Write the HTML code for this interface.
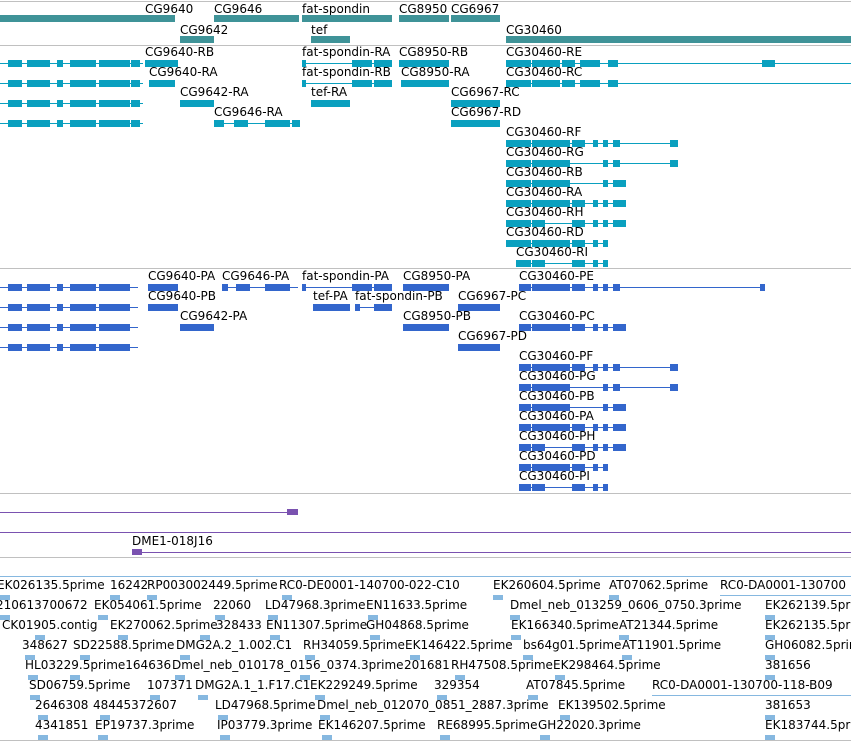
<!DOCTYPE html>
<html><head><meta charset="utf-8"><style>
body{margin:0;width:851px;height:741px;overflow:hidden;background:#fff;position:relative;font-family:"DejaVu Sans","Liberation Sans",sans-serif;font-size:12px;color:#000}
.t{position:absolute;white-space:nowrap;line-height:13px}
.s{position:absolute;height:1px;background:#c0c0c0;left:0;width:851px}
div.b{position:absolute}
</style></head><body>
<div class="s" style="top:1px"></div>
<div class="s" style="top:45px"></div>
<div class="s" style="top:268px"></div>
<div class="s" style="top:493px"></div>
<div class="s" style="top:557px"></div>
<div class="s" style="top:740px"></div>

<div class="t" style="left:145px;top:3px">CG9640</div>
<div class="t" style="left:214px;top:3px">CG9646</div>
<div class="t" style="left:302px;top:3px">fat-spondin</div>
<div class="t" style="left:399px;top:3px">CG8950</div>
<div class="t" style="left:451px;top:3px">CG6967</div>
<div class="t" style="left:180px;top:24px">CG9642</div>
<div class="t" style="left:311px;top:24px">tef</div>
<div class="t" style="left:506px;top:24px">CG30460</div>

<div class="t" style="left:145px;top:46px">CG9640-RB</div>
<div class="t" style="left:302px;top:46px">fat-spondin-RA</div>
<div class="t" style="left:399px;top:46px">CG8950-RB</div>
<div class="t" style="left:506px;top:46px">CG30460-RE</div>
<div class="t" style="left:149px;top:66px">CG9640-RA</div>
<div class="t" style="left:302px;top:66px">fat-spondin-RB</div>
<div class="t" style="left:401px;top:66px">CG8950-RA</div>
<div class="t" style="left:506px;top:66px">CG30460-RC</div>
<div class="t" style="left:180px;top:86px">CG9642-RA</div>
<div class="t" style="left:311px;top:86px">tef-RA</div>
<div class="t" style="left:451px;top:86px">CG6967-RC</div>
<div class="t" style="left:214px;top:106px">CG9646-RA</div>
<div class="t" style="left:451px;top:106px">CG6967-RD</div>
<div class="t" style="left:506px;top:126px">CG30460-RF</div>
<div class="t" style="left:506px;top:146px">CG30460-RG</div>
<div class="t" style="left:506px;top:166px">CG30460-RB</div>
<div class="t" style="left:506px;top:186px">CG30460-RA</div>
<div class="t" style="left:506px;top:206px">CG30460-RH</div>
<div class="t" style="left:506px;top:226px">CG30460-RD</div>
<div class="t" style="left:516px;top:246px">CG30460-RI</div>

<div class="t" style="left:148px;top:270px">CG9640-PA</div>
<div class="t" style="left:222px;top:270px">CG9646-PA</div>
<div class="t" style="left:302px;top:270px">fat-spondin-PA</div>
<div class="t" style="left:403px;top:270px">CG8950-PA</div>
<div class="t" style="left:519px;top:270px">CG30460-PE</div>
<div class="t" style="left:148px;top:290px">CG9640-PB</div>
<div class="t" style="left:313px;top:290px">tef-PA</div>
<div class="t" style="left:355px;top:290px">fat-spondin-PB</div>
<div class="t" style="left:458px;top:290px">CG6967-PC</div>
<div class="t" style="left:180px;top:310px">CG9642-PA</div>
<div class="t" style="left:403px;top:310px">CG8950-PB</div>
<div class="t" style="left:519px;top:310px">CG30460-PC</div>
<div class="t" style="left:458px;top:330px">CG6967-PD</div>
<div class="t" style="left:519px;top:350px">CG30460-PF</div>
<div class="t" style="left:519px;top:370px">CG30460-PG</div>
<div class="t" style="left:519px;top:390px">CG30460-PB</div>
<div class="t" style="left:519px;top:410px">CG30460-PA</div>
<div class="t" style="left:519px;top:430px">CG30460-PH</div>
<div class="t" style="left:519px;top:450px">CG30460-PD</div>
<div class="t" style="left:519px;top:470px">CG30460-PI</div>

<div class="t" style="left:132px;top:535px">DME1-018J16</div>

<div class="t" style="left:-3px;top:579px">EK026135.5prime</div>
<div class="t" style="left:110px;top:579px">16242</div>
<div class="t" style="left:147px;top:579px">RP003002449.5prime</div>
<div class="t" style="left:279px;top:579px">RC0-DE0001-140700-022-C10</div>
<div class="t" style="left:493px;top:579px">EK260604.5prime</div>
<div class="t" style="left:609px;top:579px">AT07062.5prime</div>
<div class="t" style="left:720px;top:579px">RC0-DA0001-130700</div>

<div class="t" style="left:-4px;top:599px">210613700672</div>
<div class="t" style="left:94px;top:599px">EK054061.5prime</div>
<div class="t" style="left:213px;top:599px">22060</div>
<div class="t" style="left:265px;top:599px">LD47968.3prime</div>
<div class="t" style="left:366px;top:599px">EN11633.5prime</div>
<div class="t" style="left:510px;top:599px">Dmel_neb_013259_0606_0750.3prime</div>
<div class="t" style="left:765px;top:599px">EK262139.5prime</div>

<div class="t" style="left:2px;top:619px">CK01905.contig</div>
<div class="t" style="left:110px;top:619px">EK270062.5prime</div>
<div class="t" style="left:216px;top:619px">328433</div>
<div class="t" style="left:266px;top:619px">EN11307.5prime</div>
<div class="t" style="left:366px;top:619px">GH04868.5prime</div>
<div class="t" style="left:511px;top:619px">EK166340.5prime</div>
<div class="t" style="left:619px;top:619px">AT21344.5prime</div>
<div class="t" style="left:765px;top:619px">EK262135.5prime</div>

<div class="t" style="left:22px;top:639px">348627</div>
<div class="t" style="left:73px;top:639px">SD22588.5prime</div>
<div class="t" style="left:176px;top:639px">DMG2A.2_1.002.C1</div>
<div class="t" style="left:303px;top:639px">RH34059.5prime</div>
<div class="t" style="left:405px;top:639px">EK146422.5prime</div>
<div class="t" style="left:523px;top:639px">bs64g01.5prime</div>
<div class="t" style="left:622px;top:639px">AT11901.5prime</div>
<div class="t" style="left:765px;top:639px">GH06082.5prime</div>

<div class="t" style="left:25px;top:659px">HL03229.5prime164636</div>
<div class="t" style="left:172px;top:659px">Dmel_neb_010178_0156_0374.3prime</div>
<div class="t" style="left:404px;top:659px">201681</div>
<div class="t" style="left:451px;top:659px">RH47508.5prime</div>
<div class="t" style="left:553px;top:659px">EK298464.5prime</div>
<div class="t" style="left:765px;top:659px">381656</div>

<div class="t" style="left:29px;top:679px">SD06759.5prime</div>
<div class="t" style="left:147px;top:679px">107371</div>
<div class="t" style="left:195px;top:679px">DMG2A.1_1.F17.C1</div>
<div class="t" style="left:310px;top:679px">EK229249.5prime</div>
<div class="t" style="left:434px;top:679px">329354</div>
<div class="t" style="left:526px;top:679px">AT07845.5prime</div>
<div class="t" style="left:652px;top:679px">RC0-DA0001-130700-118-B09</div>

<div class="t" style="left:35px;top:699px">2646308</div>
<div class="t" style="left:93px;top:699px">48445372607</div>
<div class="t" style="left:215px;top:699px">LD47968.5prime</div>
<div class="t" style="left:317px;top:699px">Dmel_neb_012070_0851_2887.3prime</div>
<div class="t" style="left:558px;top:699px">EK139502.5prime</div>
<div class="t" style="left:765px;top:699px">381653</div>

<div class="t" style="left:35px;top:719px">4341851</div>
<div class="t" style="left:95px;top:719px">EP19737.3prime</div>
<div class="t" style="left:217px;top:719px">IP03779.3prime</div>
<div class="t" style="left:318px;top:719px">EK146207.5prime</div>
<div class="t" style="left:437px;top:719px">RE68995.5prime</div>
<div class="t" style="left:538px;top:719px">GH22020.3prime</div>
<div class="t" style="left:765px;top:719px">EK183744.5prime</div>

<script>
function R(x1,x2,y,h,c){var d=document.createElement('div');d.className='b';d.style.cssText='left:'+x1+'px;width:'+(x2-x1)+'px;top:'+y+'px;height:'+h+'px;background:'+c;document.body.appendChild(d);}
function B(x1,x2,y,c){R(x1,x2,y-3,7,c);}
function L(x1,x2,y,c){R(x1,x2,y,1,c);}
var G='#3f9398',T='#0aa0bf',P='#3366cc',V='#7a52b0',E='#86b8e0';
B(0,175,18,G);B(214,299,18,G);B(302,392,18,G);B(399,449,18,G);B(451,500,18,G);
B(180,214,39,G);B(311,350,39,G);B(506,851,39,G);
function left(y,c,end){L(0,end,y,c);[[8,22],[27,50],[57,63],[70,96],[99,130],[131,140]].forEach(function(a){if(a[1]<=end)B(a[0],a[1],y,c)});}
[63,83,103,123].forEach(function(y){left(y,T,143)});
B(145,178,63,T);B(149,175,83,T);B(180,214,103,T);
L(214,300,123,T);B(214,224,123,T);B(234,248,123,T);B(265,290,123,T);B(292,300,123,T);
L(302,392,63,T);B(302,306,63,T);B(352,372,63,T);B(374,392,63,T);
L(302,392,83,T);B(302,306,83,T);B(352,372,83,T);B(374,392,83,T);
B(311,350,103,T);
B(399,449,63,T);B(401,449,83,T);
B(451,500,103,T);B(451,500,123,T);
L(506,851,63,T);B(506,531,63,T);B(532,560,63,T);B(562,575,63,T);B(580,600,63,T);B(608,618,63,T);B(762,775,63,T);
L(506,851,83,T);B(506,531,83,T);B(532,560,83,T);B(562,575,83,T);B(580,600,83,T);B(608,618,83,T);
function c304(x0,y,c,end,pat){L(x0,end,y,c);pat.forEach(function(a){B(a[0],a[1],y,c)});}
var full=[[506,531],[532,570],[572,585],[593,598],[603,608],[613,620]];
c304(506,143,T,678,full.concat([[670,678]]));
c304(506,163,T,678,[[506,531],[532,570],[603,608],[613,620],[670,678]]);
c304(506,183,T,626,[[506,531],[532,570],[603,608],[613,626]]);
c304(506,203,T,626,full.concat([[620,626]]));
c304(506,223,T,626,[[506,531],[532,545],[572,585],[593,598],[603,608],[613,626]]);
c304(506,243,T,608,[[506,531],[532,570],[572,585],[593,598],[603,608]]);
c304(516,263,T,608,[[516,531],[532,545],[572,585],[593,598],[603,608]]);
[287,307,327,347].forEach(function(y){left(y,P,138)});
B(148,178,287,P);B(148,178,307,P);B(180,214,327,P);
L(222,298,287,P);B(222,228,287,P);B(236,250,287,P);B(265,290,287,P);
L(302,392,287,P);B(302,306,287,P);B(352,372,287,P);B(374,392,287,P);
B(313,350,307,P);L(355,392,307,P);B(355,360,307,P);B(374,392,307,P);
B(403,449,287,P);B(403,449,327,P);
B(458,500,307,P);B(458,500,347,P);
var pf=[[519,531],[532,570],[572,585],[593,598],[603,608],[613,620]];
c304(519,287,P,765,pf.concat([[760,765]]));
c304(519,327,P,626,pf.concat([[620,626]]));
c304(519,367,P,678,pf.concat([[670,678]]));
c304(519,387,P,678,[[519,531],[532,570],[603,608],[613,620],[670,678]]);
c304(519,407,P,626,[[519,531],[532,570],[603,608],[613,626]]);
c304(519,427,P,626,pf.concat([[620,626]]));
c304(519,447,P,626,[[519,531],[532,545],[572,585],[593,598],[603,608],[613,626]]);
c304(519,467,P,608,[[519,531],[532,570],[572,585],[593,598],[603,608]]);
c304(519,487,P,608,[[519,531],[532,545],[572,585],[593,598],[603,608]]);
L(0,298,512,V);R(287,298,509,6,V);
L(0,851,532,V);
L(132,851,552,V);R(132,142,549,6,V);
L(0,851,576,E);L(720,851,595,E);L(652,851,695,E);
var arr=[[0,595],[110,595],[147,595],[282,595],[493,595],[609,595],[0,615],[98,615],[215,615],[268,615],[368,615],[510,615],[765,615],[35,635],[118,635],[200,635],[270,635],[370,635],[511,635],[619,635],[765,635],[25,655],[80,655],[180,655],[305,655],[410,655],[523,655],[622,655],[765,655],[28,675],[70,675],[175,675],[300,675],[455,675],[555,675],[765,675],[30,695],[150,695],[198,695],[315,695],[437,695],[528,695],[38,715],[100,715],[218,715],[320,715],[560,715],[765,715],[38,735],[98,735],[220,735],[322,735],[440,735],[540,735],[765,735]];
arr.forEach(function(a){R(a[0],a[0]+10,a[1],5,E)});
</script>
</body></html>
